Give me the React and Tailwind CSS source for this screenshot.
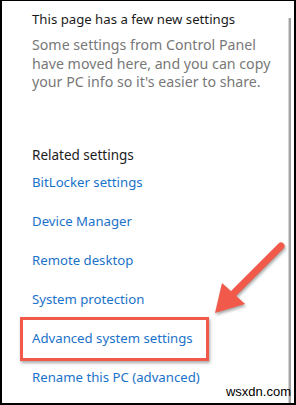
import React from 'react';

const links = [
  'BitLocker settings',
  'Device Manager',
  'Remote desktop',
  'System protection',
  'Advanced system settings',
  'Rename this PC (advanced)',
];

const Arrow = () => (
  <svg
    className="absolute left-0 top-0 pointer-events-none"
    width="296"
    height="405"
    viewBox="0 0 296 405"
    style={{ filter: 'drop-shadow(1px 2px 1.5px rgba(0,0,0,0.35))' }}
  >
    <line x1="279" y1="245" x2="229" y2="295" stroke="#f15a4a" strokeWidth="7" strokeLinecap="round" />
    <polygon points="213,312 220,282 243,303" fill="#f15a4a" />
  </svg>
);

export default function App() {
  return (
    <div className="relative w-[296px] h-[405px] bg-white border-2 border-t border-black overflow-hidden font-['Noto_Sans',sans-serif]">
      <div className="flex h-full">
        {/* settings pane */}
        <div className="flex-1 pl-[30px] pt-[8px]">
          <h2 className="text-[13.2px] leading-[20px] text-[#1b1b1b]">This page has a few new settings</h2>
          <p className="mt-[7px] text-[14.2px] leading-[18.5px] text-[#787878] whitespace-nowrap">
            Some settings from Control Panel<br />
            have moved here, and you can copy<br />
            your PC info so it's easier to share.
          </p>
          <h3 className="mt-[53px] text-[13.5px] leading-[20px] text-[#1b1b1b]">Related settings</h3>
          <div className="mt-[7px] flex flex-col gap-[19px]">
            {links.map(l => (
              <a key={l} className="text-[13.2px] leading-[20px] text-[#1a72c9]">{l}</a>
            ))}
          </div>
        </div>
        {/* scrollbar */}
        <div className="w-[3px] mt-[17px] mr-[3px] bg-[#a3a3a3] border-l border-[#d4d4d4]" />
      </div>

      {/* annotation */}
      <div className="absolute left-[18px] top-[316px] w-[189px] h-[44px] border-[3px] border-[#f15a4a] shadow-[1px_2px_3px_rgba(0,0,0,0.35)]" />
      <Arrow />

      <span className="absolute right-[3px] bottom-[3px] text-[13px] leading-[16px] text-black font-['Liberation_Sans',sans-serif]">wsxdn.com</span>
    </div>
  );
}
